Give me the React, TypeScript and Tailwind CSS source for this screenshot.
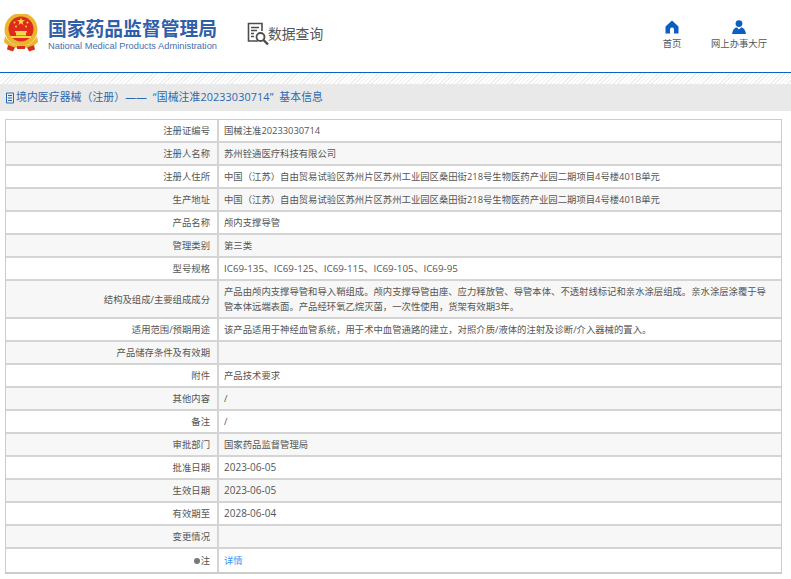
import { Fragment } from "react"

const address = "中国（江苏）自由贸易试验区苏州片区苏州工业园区桑田街218号生物医药产业园二期项目4号楼401B单元"

const rows: { label: string; value?: string; tall?: boolean; size?: string }[] = [
  { label: "注册证编号", value: "国械注准20233030714" },
  { label: "注册人名称", value: "苏州铨通医疗科技有限公司" },
  { label: "注册人住所", value: address },
  { label: "生产地址", value: address },
  { label: "产品名称", value: "颅内支撑导管" },
  { label: "管理类别", value: "第三类" },
  { label: "型号规格", value: "IC69-135、IC69-125、IC69-115、IC69-105、IC69-95", size: "text-[9.800px]" },
  {
    label: "结构及组成/主要组成成分",
    value:
      "产品由颅内支撑导管和导入鞘组成。颅内支撑导管由座、应力释放管、导管本体、不透射线标记和亲水涂层组成。亲水涂层涂覆于导管本体远端表面。产品经环氧乙烷灭菌，一次性使用，货架有效期3年。",
    tall: true,
  },
  { label: "适用范围/预期用途", value: "该产品适用于神经血管系统，用于术中血管通路的建立，对照介质/液体的注射及诊断/介入器械的置入。" },
  { label: "产品储存条件及有效期" },
  { label: "附件", value: "产品技术要求" },
  { label: "其他内容", value: "/" },
  { label: "备注", value: "/" },
  { label: "审批部门", value: "国家药品监督管理局" },
  { label: "批准日期", value: "2023-06-05", size: "text-[10px]" },
  { label: "生效日期", value: "2023-06-05", size: "text-[10px]" },
  { label: "有效期至", value: "2028-06-04", size: "text-[10px]" },
  { label: "变更情况" },
]

function Emblem() {
  return (
    <svg width="36" height="38" viewBox="0 0 36 38">
      <circle cx="18" cy="15.5" r="16.5" fill="#eab62f" />
      <circle cx="18" cy="15" r="12.5" fill="#e0291b" />
      <path d="M18 3.500l1 2.800h3l-2.400 1.800.9 2.900L18 9.300 15.500 11l.9-2.900L14 6.300h3z" fill="#f8d84a" />
      <circle cx="11.500" cy="8.500" r="1" fill="#f8d84a" />
      <circle cx="24.500" cy="8.500" r="1" fill="#f8d84a" />
      <circle cx="13" cy="12.500" r=".9" fill="#f8d84a" />
      <circle cx="23" cy="12.500" r=".9" fill="#f8d84a" />
      <path d="M12 17h12v1.500h-1v3h-10v-3h-1z" fill="#f8d84a" />
      <rect x="8" y="22" width="20" height="2" fill="#f8d84a" />
      <path d="M2 22c3 6 9 10 16 10s13-4 16-10l1 6c-4 4-10 6-17 6S5 32 1 28z" fill="#eab62f" />
      <path d="M5 31l7 2.500-2 4-6-2zM31 31l-7 2.500 2 4 6-2z" fill="#d8301f" />
      <rect x="14" y="32" width="8" height="3" fill="#d8301f" />
    </svg>
  )
}

function QueryIcon() {
  return (
    <svg width="23" height="24" viewBox="0 0 23 24" fill="none" stroke="#4d4d4d">
      <path d="M11 19H1.500V1.500H15V9" strokeWidth="1.6" />
      <path d="M4 5.500h8M4 8.500h6M4 11.500h3M4 14.500h3" strokeWidth="1.3" />
      <circle cx="13.500" cy="15" r="4" strokeWidth="1.8" />
      <path d="M16.500 18l4.500 4.500" strokeWidth="2.4" />
    </svg>
  )
}

export default function App() {
  return (
    <div className="w-[791px] h-[579px] overflow-hidden bg-white font-['Open_Sans','Noto_Sans_CJK_SC',sans-serif]">
      <header className="h-[73px] border-b border-[#0a63c4] flex items-start">
        <div className="ml-[3px] mt-[14px]">
          <Emblem />
        </div>
        <div className="ml-[9px] mt-[18px] w-[172px]">
          <div className="text-[18.800px] leading-[22px] font-bold text-[#2f5fa8] whitespace-nowrap">国家药品监督管理局</div>
          <div className="text-[9.300px] leading-[12px] text-[#4a6ea8] whitespace-nowrap font-['Liberation_Sans',sans-serif]">National Medical Products Administration</div>
        </div>
        <div className="ml-[27px] mt-[22px] flex items-center">
          <QueryIcon />
          <span className="text-[13.800px] leading-[22px] text-[#555] -ml-[2px]">数据查询</span>
        </div>
        <nav className="ml-auto flex mt-[20px] mr-[23px]">
          <div className="flex flex-col items-center w-[40px] mr-[18px]">
            <svg width="14" height="14" viewBox="0 0 14 14" fill="#0a5fc0">
              <path d="M7 .5 13.500 6.500V13.500H9V9.500a2 2 0 0 0-4 0v4H.5V6.500z" />
            </svg>
            <span className="mt-[3px] text-[9.350px] leading-[14px] text-[#555]">首页</span>
          </div>
          <div className="flex flex-col items-center w-[58px]">
            <svg width="14" height="14" viewBox="0 0 14 14" fill="#0a5fc0">
              <circle cx="7" cy="3.600" r="3.400" />
              <path d="M0 14c.4-4 2.600-6.200 4.600-6.800L7 9.500l2.400-2.300c2 .6 4.200 2.800 4.600 6.800z" />
            </svg>
            <span className="mt-[3px] text-[9.350px] leading-[14px] text-[#555] whitespace-nowrap">网上办事大厅</span>
          </div>
        </nav>
      </header>
      <div className="h-[11px] bg-[repeating-linear-gradient(135deg,#eeeeee_0px,#eeeeee_1px,#ffffff_1px,#ffffff_3px)]" />
      <div className="h-[27px] bg-[#e9e9e9] flex items-center pl-[5px] text-[10.800px] tracking-[0.12px] text-[#2b68b0] whitespace-pre">
        <svg width="11" height="12" viewBox="0 0 11 12" fill="none" stroke="#2b68b0">
          <path d="M1.500 1h7v10h-7zM3 3.500h4M3 6h4M3 8.500h4" />
        </svg>
        <span>境内医疗器械（注册）——  “国械注准20233030714”  基本信息</span>
      </div>
      <div className="ml-[5px] mt-[8px] w-[777px] border border-[#cccccc] border-b-2 grid grid-cols-[211px_1fr] text-[9.350px] leading-[15px] text-[#555]">
        {rows.map((row, i) => (
          <Fragment key={row.label}>
            <div className={`flex items-center justify-end pr-[7px] border-b-2 border-[#d4d4d4] ${row.tall ? "h-[38px]" : "h-[23px]"} ${i % 2 ? "bg-[#f7f7f7]" : "bg-white"}`}>
              {row.label}
            </div>
            <div className={`flex items-center pl-[5px] pr-[12px] border-l-2 border-b-2 border-[#d4d4d4] ${row.tall ? "h-[38px]" : "h-[23px]"} ${row.size ?? ""} ${i % 2 ? "bg-[#f7f7f7]" : "bg-white"}`}>
              {row.value}
            </div>
          </Fragment>
        ))}
        <div className="flex items-center justify-end pr-[7px] h-[23px]">
          <span className="w-[6px] h-[6px] rounded-full bg-[#777] mr-[1px]" />
          注
        </div>
        <div className="flex items-center pl-[5px] border-l-2 border-[#d4d4d4] h-[23px] text-[#3b95f0]">详情</div>
      </div>
    </div>
  )
}
